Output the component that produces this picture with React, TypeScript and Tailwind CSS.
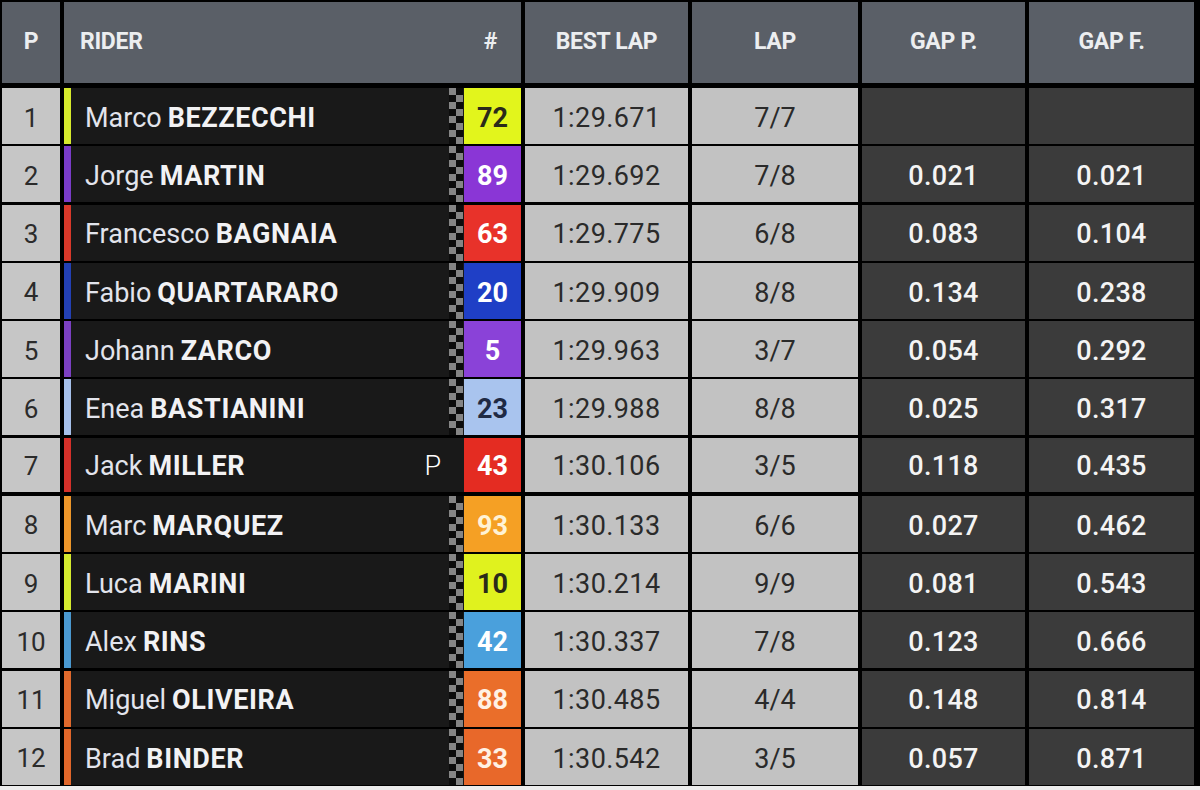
type Row = {
	pos: number;
	first: string;
	last: string;
	num: string;
	stripe: string;
	badge: string;
	badgeText: string;
	best: string;
	lap: string;
	gapP: string;
	gapF: string;
	pit?: boolean;
};

const rows: Row[] = [
	{pos: 1, first: "Marco", last: "BEZZECCHI", num: "72", stripe: "bg-[#d6ea2c]", badge: "bg-[#e2f51c]", badgeText: "text-[#2a2a1a]", best: "1:29.671", lap: "7/7", gapP: "", gapF: ""},
	{pos: 2, first: "Jorge", last: "MARTIN", num: "89", stripe: "bg-[#7a3cc8]", badge: "bg-[#8a36d6]", badgeText: "text-white", best: "1:29.692", lap: "7/8", gapP: "0.021", gapF: "0.021"},
	{pos: 3, first: "Francesco", last: "BAGNAIA", num: "63", stripe: "bg-[#d8382a]", badge: "bg-[#e8322a]", badgeText: "text-white", best: "1:29.775", lap: "6/8", gapP: "0.083", gapF: "0.104"},
	{pos: 4, first: "Fabio", last: "QUARTARARO", num: "20", stripe: "bg-[#2340b4]", badge: "bg-[#1f3fc6]", badgeText: "text-white", best: "1:29.909", lap: "8/8", gapP: "0.134", gapF: "0.238"},
	{pos: 5, first: "Johann", last: "ZARCO", num: "5", stripe: "bg-[#7b40c2]", badge: "bg-[#8a42d8]", badgeText: "text-white", best: "1:29.963", lap: "3/7", gapP: "0.054", gapF: "0.292"},
	{pos: 6, first: "Enea", last: "BASTIANINI", num: "23", stripe: "bg-[#a6c0ea]", badge: "bg-[#a9c4ee]", badgeText: "text-[#1f2a44]", best: "1:29.988", lap: "8/8", gapP: "0.025", gapF: "0.317"},
	{pos: 7, first: "Jack", last: "MILLER", num: "43", stripe: "bg-[#d4302a]", badge: "bg-[#e42c22]", badgeText: "text-white", best: "1:30.106", lap: "3/5", gapP: "0.118", gapF: "0.435", pit: true},
	{pos: 8, first: "Marc", last: "MARQUEZ", num: "93", stripe: "bg-[#ec962a]", badge: "bg-[#f5a024]", badgeText: "text-[#fff3d6]", best: "1:30.133", lap: "6/6", gapP: "0.027", gapF: "0.462"},
	{pos: 9, first: "Luca", last: "MARINI", num: "10", stripe: "bg-[#d4ea2e]", badge: "bg-[#e0f21e]", badgeText: "text-[#2a2a1a]", best: "1:30.214", lap: "9/9", gapP: "0.081", gapF: "0.543"},
	{pos: 10, first: "Alex", last: "RINS", num: "42", stripe: "bg-[#4a98d0]", badge: "bg-[#4aa0dc]", badgeText: "text-white", best: "1:30.337", lap: "7/8", gapP: "0.123", gapF: "0.666"},
	{pos: 11, first: "Miguel", last: "OLIVEIRA", num: "88", stripe: "bg-[#e0692c]", badge: "bg-[#ea6e2a]", badgeText: "text-[#fff1e4]", best: "1:30.485", lap: "4/4", gapP: "0.148", gapF: "0.814"},
	{pos: 12, first: "Brad", last: "BINDER", num: "33", stripe: "bg-[#e0662a]", badge: "bg-[#e8682a]", badgeText: "text-[#fff1e4]", best: "1:30.542", lap: "3/5", gapP: "0.057", gapF: "0.871"},
];

function Checker() {
	const sq = 7;
	const cells = [];
	for (let r = 0; r < 8; r++) {
		for (let c = 0; c < 2; c++) {
			const gray = (r + c) % 2 === 0;
			cells.push(
				<rect key={`${r}-${c}`} x={c * sq} y={r * sq} width={sq} height={sq} fill={gray ? "#858585" : "#0c0c0c"}/>
			);
		}
	}
	return (
		<svg width={14} height={56} viewBox="0 0 14 56" className="h-full w-[14px]" preserveAspectRatio="none">
			{cells}
		</svg>
	);
}

const font = "font-['Roboto',sans-serif]";
const head = "bg-[#5a5f67] flex items-center text-[#eceef0] font-bold text-[23px] tracking-[-0.3px]";

export default function App() {
	return (
		<div className={`w-[1200px] h-[790px] bg-black overflow-hidden flex flex-col ${font}`}>
			<div className="grid grid-cols-[58px_457px_163px_166px_163px_165px] gap-x-[4px] pl-[2px] h-[83px] pt-[2px]">
				<div className={`${head} justify-center`}>P</div>
				<div className={`${head} pl-[16px]`}>
					<span className="flex-1">RIDER</span>
					<span className="w-[57px] text-center pr-[4px]">#</span>
				</div>
				<div className={`${head} justify-center`}>BEST LAP</div>
				<div className={`${head} justify-center`}>LAP</div>
				<div className={`${head} justify-center`}>GAP P.</div>
				<div className={`${head} justify-center`}>GAP F.</div>
			</div>
			<div className="grid grid-rows-12 gap-y-[4px] h-[695px] mt-[5px]">
				{rows.map((r) => (
					<div key={r.pos} className="grid grid-cols-[58px_457px_163px_166px_163px_165px] gap-x-[4px] pl-[2px]">
						<div className="bg-[#c6c6c6] flex items-center justify-center pt-[4px] text-[#2b2b2b] text-[26px]">{r.pos}</div>
						<div className="bg-[#191919] flex items-stretch">
							<div className={`w-[7px] ${r.stripe}`}/>
							<div className="flex-1 flex items-center pt-[4px] pl-[14px] text-[27px] text-[#e2e4ec]">
								<span>{r.first}</span>
								<span className="ml-[6px] font-bold text-[#f2f2f4] tracking-[0.6px]">{r.last}</span>
								{r.pit && <span className="ml-auto mr-[8px] text-[27px] font-light text-white">P</span>}
							</div>
							<div className="w-[15px] flex items-stretch">{!r.pit && <Checker/>}</div>
							<div className={`w-[57px] flex items-center justify-center pt-[4px] text-[27px] font-bold ${r.badge} ${r.badgeText}`}>{r.num}</div>
						</div>
						<div className="bg-[#c2c2c2] flex items-center justify-center pt-[4px] text-[#2a2a2a] text-[27px] tracking-[0.4px]">{r.best}</div>
						<div className="bg-[#c2c2c2] flex items-center justify-center pt-[4px] text-[#2a2a2a] text-[27px]">{r.lap}</div>
						<div className="bg-[#3b3b3b] flex items-center justify-center pt-[4px] text-[#f4f4f4] text-[27px] font-medium tracking-[0.3px]">{r.gapP}</div>
						<div className="bg-[#3b3b3b] flex items-center justify-center pt-[4px] text-[#f4f4f4] text-[27px] font-medium tracking-[0.3px]">{r.gapF}</div>
					</div>
				))}
			</div>
			<div className="flex-1 mt-[3px] bg-[#ececec]"/>
		</div>
	);
}
